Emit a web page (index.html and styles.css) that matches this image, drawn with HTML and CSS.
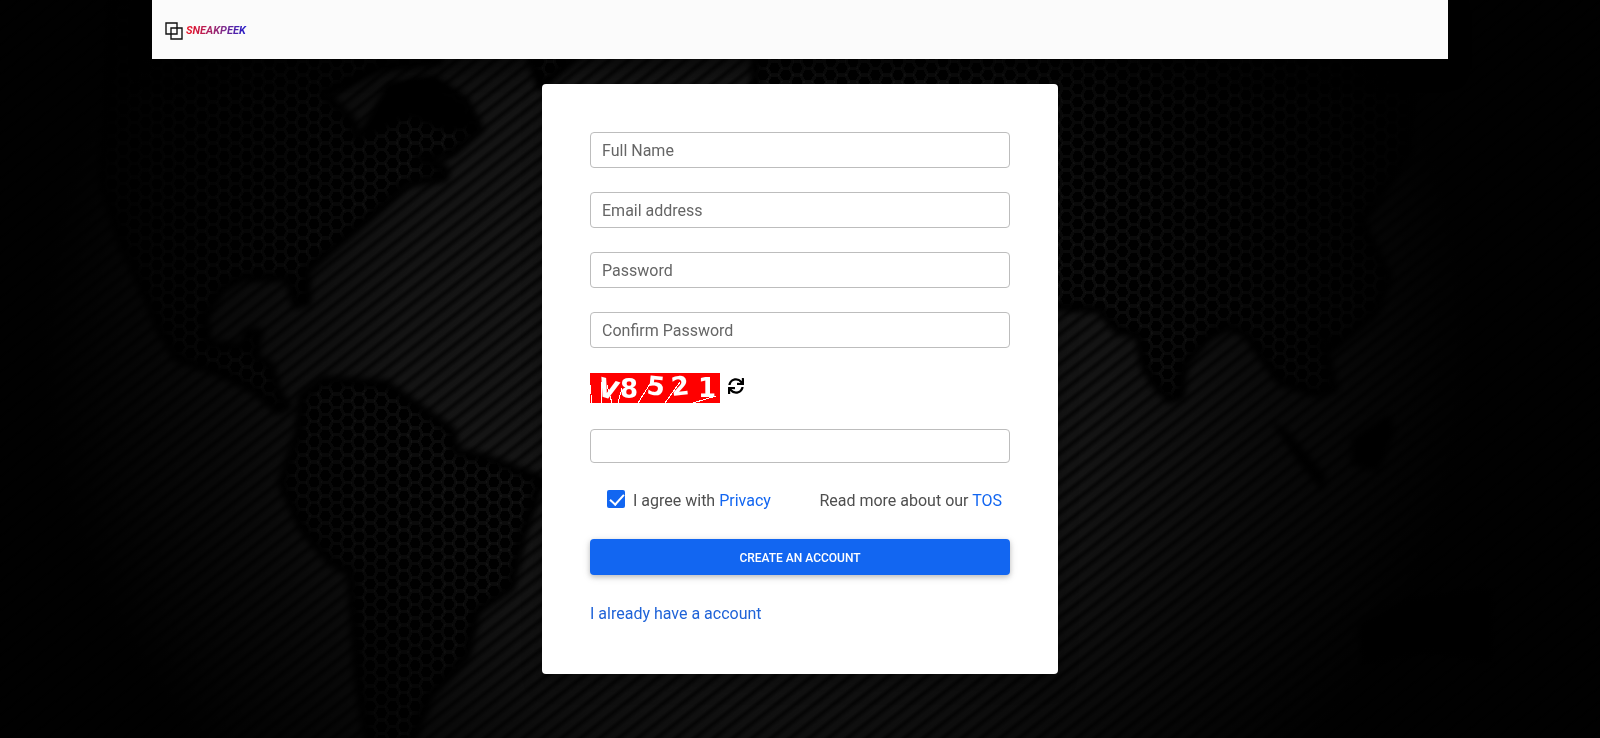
FILE: index.html
```html
<!DOCTYPE html>
<html lang="en">
<head>
<meta charset="utf-8">
<meta name="viewport" content="width=device-width, initial-scale=1">
<title>Sneakpeek</title>
<link rel="stylesheet" href="styles.css">
</head>
<body>
<svg class="backdrop" viewBox="0 0 1568 723" preserveAspectRatio="xMidYMid slice" aria-hidden="true">
  <defs>
    <linearGradient id="ridge" x1="0" y1="0" x2="0" y2="1">
      <stop offset="0" stop-color="#070707"/>
      <stop offset="0.4" stop-color="#171717"/>
      <stop offset="0.7" stop-color="#171717"/>
      <stop offset="1" stop-color="#070707"/>
    </linearGradient>
    <pattern id="stripes" width="40" height="11.5" patternUnits="userSpaceOnUse" patternTransform="rotate(-38)">
      <rect width="40" height="11.5" fill="url(#ridge)"/>
    </pattern>
    <pattern id="hexes" width="22" height="13.3" patternUnits="userSpaceOnUse" patternTransform="translate(0 7)">
      <rect width="22" height="13.3" fill="#020202"/>
      <path d="M0 6.65H3.700L7.300 0H14.700L18.300 6.650H22M3.700 6.650L7.300 13.300H14.700L18.300 6.650" fill="none" stroke="#1c1c1c" stroke-width="1.5"/>
    </pattern>
    <radialGradient id="shade" gradientUnits="userSpaceOnUse" cx="0" cy="0" r="1" gradientTransform="translate(740 340) scale(700 620)">
      <stop offset="0.2" stop-color="#000" stop-opacity="0"/>
      <stop offset="0.5" stop-color="#000" stop-opacity="0.15"/>
      <stop offset="0.75" stop-color="#000" stop-opacity="0.6"/>
      <stop offset="1" stop-color="#000" stop-opacity="0.96"/>
    </radialGradient>
    <filter id="soft"><feGaussianBlur stdDeviation="0.8"/></filter>
    <filter id="coast" x="-5%" y="-5%" width="110%" height="110%"><feGaussianBlur stdDeviation="3"/></filter>
    <g id="land">
      <path d="M110 0H430V60L375 65 355 74 318 92 345 118 350 135 365 125 385 88 402 82 425 78 456 99 470 126 443 150 410 156 436 165 436 174 398 180 364 211 324 245 300 266 301 296 290 298 283 272H238L218 283 201 310 204 337 238 340 243 325H254L250 350 265 358 272 384 282 398 272 402 252 384 215 365 174 351 157 324 143 290 120 240 100 180Z"/>
      <path d="M296 388 317 372 378 376 409 398 443 422 446 442 477 449 531 470 511 527 501 575 467 599 457 643 422 681 402 730H361L351 667 344 561 324 551 296 517 276 473 293 422Z"/>
      <path d="M515 40 530 85 570 50Z"/>
      <path d="M740 0H1390L1380 150 1334 218 1361 272 1347 307 1307 341 1296 327 1307 381 1290 386 1255 374 1238 351 1221 327 1204 320 1184 330 1160 358 1157 388 1146 391 1133 378 1121 358 1116 327 1095 324 1078 303 1034 300H740Z"/>
    </g>
  </defs>
  <rect width="1568" height="723" fill="url(#stripes)"/>
  <use href="#land" fill="url(#hexes)" filter="url(#soft)"/>
  <use href="#land" fill="none" stroke="#020202" stroke-width="9" stroke-linejoin="round" filter="url(#coast)"/>
  <g fill="#020202" filter="url(#coast)">
    <path d="M380 82 420 78 456 99 468 126 440 130 400 115 370 130 350 135Z"/>
    <path d="M1245 412 1262 422 1300 466 1296 482 1272 453Z"/>
    <path d="M1361 405 1368 422 1351 463 1324 456V429Z"/>
    <path d="M1330 610 1380 585 1463 575V650L1400 640 1334 652Z"/>
  </g>
  <rect width="1568" height="723" fill="url(#shade)"/>
</svg>

<header class="topbar">
  <a class="brand" href="#">
    <svg class="brand-mark" viewBox="0 0 18 18" aria-hidden="true">
      <path d="M1 1H12V12H1ZM6 6H17V17H6Z" fill="none" stroke="#111" stroke-width="1.4"/>
    </svg>
    <span class="brand-name">SNEAKPEEK</span>
  </a>
</header>

<main class="card">
  <form class="signup">
    <input class="field" type="text" placeholder="Full Name" aria-label="Full Name">
    <input class="field" type="email" placeholder="Email address" aria-label="Email address">
    <input class="field" type="password" placeholder="Password" aria-label="Password">
    <input class="field" type="password" placeholder="Confirm Password" aria-label="Confirm Password">

    <div class="captcha">
      <svg class="captcha-code" viewBox="0 0 130 30" role="img" aria-label="Captcha code">
        <rect width="130" height="30" fill="#f00"/>
        <g class="captcha-glyphs" fill="#fff" text-anchor="middle">
          <text x="18" y="25" transform="rotate(17 18 16)">V</text>
          <text x="39" y="25">8</text>
          <text x="66" y="22" transform="rotate(6 66 13)">5</text>
          <text x="90" y="22" transform="rotate(-6 90 12)">2</text>
          <text x="117" y="24">1</text>
        </g>
        <path d="M.5 12 1.500 30M11.500 9V30M17 12 22 30M28 30 32 15M48 30 65 3M75 30 90 9M103 30 126 23" fill="none" stroke="#fff" stroke-width="1" shape-rendering="crispEdges"/>
      </svg>
      <button class="refresh" type="button" aria-label="Refresh captcha">
        <svg class="refresh-icon" viewBox="0 0 512 512" aria-hidden="true"><path d="M440.650 12.570l4 82.770A247.160 247.160 0 0 0 255.830 8C134.730 8 33.910 94.920 12.290 209.820A12 12 0 0 0 24.090 224h49.050a12 12 0 0 0 11.670-9.260 175.910 175.910 0 0 1 317-56.940l-101.460-4.860a12 12 0 0 0-12.570 12v47.410a12 12 0 0 0 12 12H500a12 12 0 0 0 12-12V12a12 12 0 0 0-12-12h-47.370a12 12 0 0 0-11.980 12.570zM255.830 432a175.610 175.610 0 0 1-146-77.800l101.800 4.870a12 12 0 0 0 12.570-12v-47.400a12 12 0 0 0-12-12H12a12 12 0 0 0-12 12V500a12 12 0 0 0 12 12h47.350a12 12 0 0 0 12-12.600l-4.150-82.570A247.170 247.170 0 0 0 255.830 504c121.110 0 221.930-86.920 243.550-201.820a12 12 0 0 0-11.800-14.180h-49.050a12 12 0 0 0-11.670 9.260A175.860 175.860 0 0 1 255.830 432z"/></svg>
      </button>
    </div>

    <input class="field field-code" type="text" aria-label="Captcha code">

    <div class="terms">
      <div class="agree">
        <input class="check" type="checkbox" id="agree" checked>
        <label for="agree">I agree with <a href="#">Privacy</a></label>
      </div>
      <div>Read more about our <a href="#">TOS</a></div>
    </div>

    <button class="submit" type="submit">CREATE AN ACCOUNT</button>
    <a class="login" href="#">I already have a account</a>
  </form>
</main>
</body>
</html>
```
FILE: styles.css
```css
* {
  box-sizing: border-box;
}

body {
  margin: 0;
  min-height: 100vh;
  background: #000;
  color: #4f4f4f;
  font-family: Roboto, "Liberation Sans", sans-serif;
  font-size: 16px;
  line-height: 24px;
}

a {
  color: #1266f1;
  text-decoration: none;
}

.backdrop {
  position: fixed;
  inset: 0;
  z-index: -1;
  width: 100%;
  height: 100%;
}

.topbar {
  display: flex;
  align-items: center;
  max-width: 1296px;
  min-height: 59px;
  margin: 0 auto;
  padding: 2px 13px 0;
  background: #fbfbfb;
  box-shadow: 0 10px 20px rgba(0, 0, 0, 0.5);
}

.brand {
  display: flex;
  align-items: center;
  gap: 3px;
}

.brand-mark {
  width: 18px;
  height: 18px;
}

.brand-name {
  padding-right: 2px;
  background: linear-gradient(90deg, #f01020, #8a2a80 55%, #1a1ad0);
  background-clip: text;
  color: transparent;
  font-size: 11px;
  font-style: italic;
  font-weight: 700;
}

.card {
  max-width: 516px;
  margin: 25px auto 64px;
  padding: 48px;
  border-radius: 4px;
  background: #fff;
  box-shadow: 0 10px 20px rgba(0, 0, 0, 0.3);
}

.signup {
  display: flex;
  flex-direction: column;
  gap: 24px;
}

.field {
  width: 100%;
  height: 36px;
  padding: 1px 11px 0;
  border: 1px solid #bdbdbd;
  border-radius: 4px;
  background: #fff;
  color: #4f4f4f;
  font: inherit;
}

.field::placeholder {
  color: #666;
  opacity: 1;
}

.field-code {
  height: 34px;
}

.captcha {
  display: flex;
  align-items: flex-start;
  gap: 8px;
  padding: 1px 0 2px;
}

.captcha-code {
  width: 130px;
  height: 30px;
  overflow: visible;
}

.captcha-glyphs {
  font-family: "DejaVu Sans", sans-serif;
  font-size: 26px;
  font-weight: 700;
}

.refresh {
  display: flex;
  padding: 5px 0;
  border: 0;
  background: none;
  color: #000;
}

.refresh-icon {
  width: 16px;
  height: 16px;
  fill: currentColor;
}

.terms {
  display: flex;
  justify-content: space-between;
  padding: 2px 8px 2px 17px;
}

.agree {
  display: flex;
  gap: 8px;
}

.check {
  appearance: none;
  width: 18px;
  height: 18px;
  margin: 1px 0;
  border-radius: 2px;
  background: #1266f1;
}

.check:checked::before {
  content: "";
  display: block;
  width: 6px;
  height: 12px;
  margin: 1px 0 0 6px;
  border: solid #fff;
  border-width: 0 2px 2px 0;
  transform: rotate(42deg);
}

.submit {
  height: 36px;
  padding: 2px 0 0;
  border: 0;
  border-radius: 4px;
  background: #1266f1;
  box-shadow: 0 2px 5px rgba(0, 0, 0, 0.2), 0 2px 10px rgba(0, 0, 0, 0.1);
  color: #fff;
  font: inherit;
  font-size: 12px;
  font-weight: 500;
}

.login {
  align-self: flex-start;
  margin-top: 3px;
  color: #1f63d8;
}
```
